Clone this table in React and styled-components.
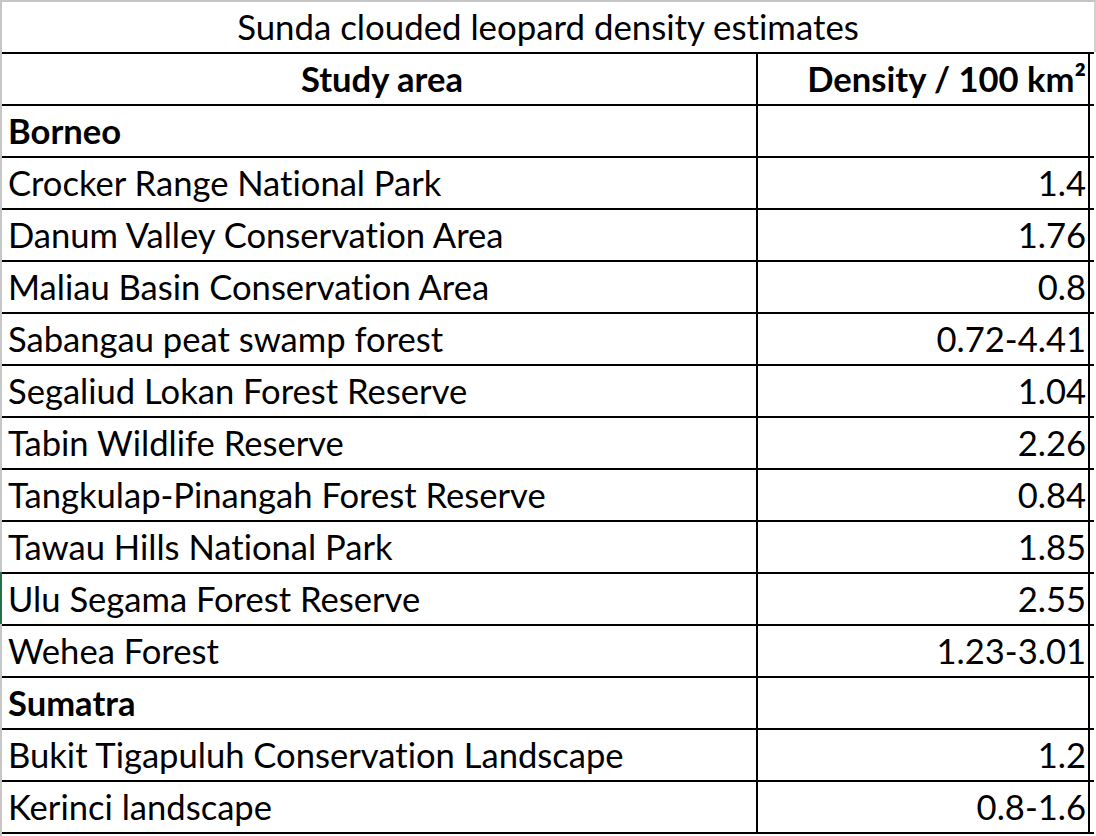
import styled, { createGlobalStyle } from "styled-components";

const GlobalStyle = createGlobalStyle`
  html, body {
    margin: 0;
    padding: 0;
    background: #ffffff;
  }
  body {
    font-family: Lato, "Liberation Sans", sans-serif;
    font-variant-ligatures: none;
    color: #000;
  }
`;

const Sheet = styled.div`
  width: 1094px;
  height: 836px;
  border-left: 2px solid #c6c6c6;
  display: flex;
  flex-direction: column;
  background: #fff;
`;

const TitleRow = styled.div`
  height: 50px;
  width: 1092px;
  border-top: 2px solid #c6c6c6;
  border-right: 2px solid #d0d0d0;
  font-size: 34.8px;
  line-height: 50px;
  text-align: center;
  white-space: nowrap;
`;

const Row = styled.div`
  display: flex;
  width: 1092px;
  height: 50px;
  border-top: 2px solid #000;
  border-bottom: ${(p) => (p.$last ? "2px solid #000" : "none")};
  box-shadow: ${(p) => (p.$selected ? "-2px 0 0 #217346" : "none")};
`;

const Cell = styled.div`
  font-size: 34.6px;
  line-height: 50px;
  white-space: nowrap;
  overflow: hidden;
  border-right: 2px solid #000;
  font-weight: ${(p) => (p.$bold ? 700 : 400)};
  text-align: ${(p) => p.$align || "left"};
`;

const NameCell = styled(Cell)`
  width: 756px;
  padding: 0 0 0 6px;
  box-sizing: border-box;
`;

const ValueCell = styled(Cell)`
  width: 332px;
  padding: 0 2px 0 0;
  box-sizing: border-box;
  text-align: right;
`;

const rows = [
  { name: "Borneo", value: "", bold: true },
  { name: "Crocker Range National Park", value: "1.4" },
  { name: "Danum Valley Conservation Area", value: "1.76" },
  { name: "Maliau Basin Conservation Area", value: "0.8" },
  { name: "Sabangau peat swamp forest", value: "0.72-4.41" },
  { name: "Segaliud Lokan Forest Reserve", value: "1.04" },
  { name: "Tabin Wildlife Reserve", value: "2.26" },
  { name: "Tangkulap-Pinangah Forest Reserve", value: "0.84" },
  { name: "Tawau Hills National Park", value: "1.85" },
  { name: "Ulu Segama Forest Reserve", value: "2.55", selected: true },
  { name: "Wehea Forest", value: "1.23-3.01" },
  { name: "Sumatra", value: "", bold: true },
  { name: "Bukit Tigapuluh Conservation Landscape", value: "1.2" },
  { name: "Kerinci landscape", value: "0.8-1.6" },
];

export default function App() {
  return (
    <>
      <GlobalStyle />
      <Sheet>
        <TitleRow>Sunda clouded leopard density estimates</TitleRow>
        <Row>
          <NameCell $bold $align="center">
            Study area
          </NameCell>
          <ValueCell $bold>Density / 100 km²</ValueCell>
        </Row>
        {rows.map((r, i) => (
          <Row key={r.name} $selected={r.selected} $last={i === rows.length - 1}>
            <NameCell $bold={r.bold}>{r.name}</NameCell>
            <ValueCell>{r.value}</ValueCell>
          </Row>
        ))}
      </Sheet>
    </>
  );
}
